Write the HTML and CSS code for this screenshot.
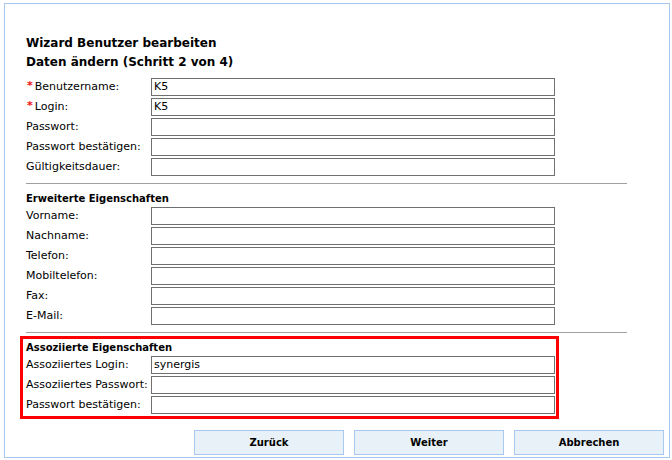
FILE: index.html
```html
<!DOCTYPE html>
<html>
<head>
<meta charset="utf-8">
<link rel="stylesheet" href="styles.css">
</head>
<body>
<div class="panel">
  <div class="title">
    <div>Wizard Benutzer bearbeiten</div>
    <div>Daten ändern (Schritt 2 von 4)</div>
  </div>
  <div class="form">
    <label class="lbl"><span class="req">*</span>Benutzername:</label><div class="inp">K5</div>
    <label class="lbl"><span class="req">*</span>Login:</label><div class="inp">K5</div>
    <label class="lbl">Passwort:</label><div class="inp"></div>
    <label class="lbl">Passwort bestätigen:</label><div class="inp"></div>
    <label class="lbl">Gültigkeitsdauer:</label><div class="inp"></div>
  </div>
  <hr class="sep sep1">
  <div class="heading">Erweiterte Eigenschaften</div>
  <div class="form">
    <label class="lbl">Vorname:</label><div class="inp"></div>
    <label class="lbl">Nachname:</label><div class="inp"></div>
    <label class="lbl">Telefon:</label><div class="inp"></div>
    <label class="lbl">Mobiltelefon:</label><div class="inp"></div>
    <label class="lbl">Fax:</label><div class="inp"></div>
    <label class="lbl">E-Mail:</label><div class="inp"></div>
  </div>
  <hr class="sep sep2">
  <div class="assoc">
    <div class="heading">Assoziierte Eigenschaften</div>
    <div class="form">
      <label class="lbl">Assoziiertes Login:</label><div class="inp">synergis</div>
      <label class="lbl">Assoziiertes Passwort:</label><div class="inp"></div>
      <label class="lbl">Passwort bestätigen:</label><div class="inp"></div>
    </div>
  </div>
  <div class="buttons">
    <button class="btn">Zurück</button>
    <button class="btn">Weiter</button>
    <button class="btn">Abbrechen</button>
  </div>
</div>
</body>
</html>
```
FILE: styles.css
```css
html, body {
  margin: 0;
  padding: 0;
  background: #ffffff;
}
body {
  font-family: "DejaVu Sans", Verdana, sans-serif;
  font-size: 11px;
  color: #000;
}
.panel {
  box-sizing: border-box;
  margin: 3px 0 0 4px;
  width: 666px;
  height: 455px;
  border: 1px solid #a8c8f0;
  padding: 30px 0 0 21px;
}
.title {
  font-size: 12px;
  font-weight: bold;
  line-height: 19px;
  margin-bottom: 6px;
}
.form {
  display: grid;
  grid-template-columns: 125px 404px;
  row-gap: 2px;
}
.lbl {
  height: 18px;
  line-height: 18px;
  white-space: nowrap;
}
.req {
  color: #ee1111;
  font-weight: bold;
  margin-right: 2px;
  margin-left: 1px;
  position: relative;
  top: -1px;
}
.inp {
  box-sizing: border-box;
  height: 18px;
  border: 1px solid #707070;
  padding: 0 0 0 2px;
  line-height: 16px;
  background: #fff;
}
.sep {
  border: 0;
  height: 1px;
  background: #a0a0a0;
  width: 601px;
  margin: 0;
}
.sep1 { margin-top: 7px; }
.sep2 { margin-top: 7px; }
.heading {
  font-size: 10px;
  font-weight: bold;
  line-height: 14px;
  margin-top: 8px;
  margin-bottom: 1px;
}
.assoc {
  box-sizing: border-box;
  width: 539px;
  margin: 3px 0 0 -6px;
  border: 3px solid #ff0000;
  padding: 0 1px 2px 3px;
}
.assoc .heading {
  margin-top: 2px;
}
.buttons {
  display: flex;
  gap: 10px;
  margin: 11px 0 0 168px;
}
.btn {
  box-sizing: border-box;
  width: 150px;
  height: 25px;
  background: #e8f0f8;
  border: 1px solid #a8c8f0;
  font-family: "DejaVu Sans", Verdana, sans-serif;
  font-size: 10px;
  font-weight: bold;
  color: #000;
  padding: 0;
}
```
